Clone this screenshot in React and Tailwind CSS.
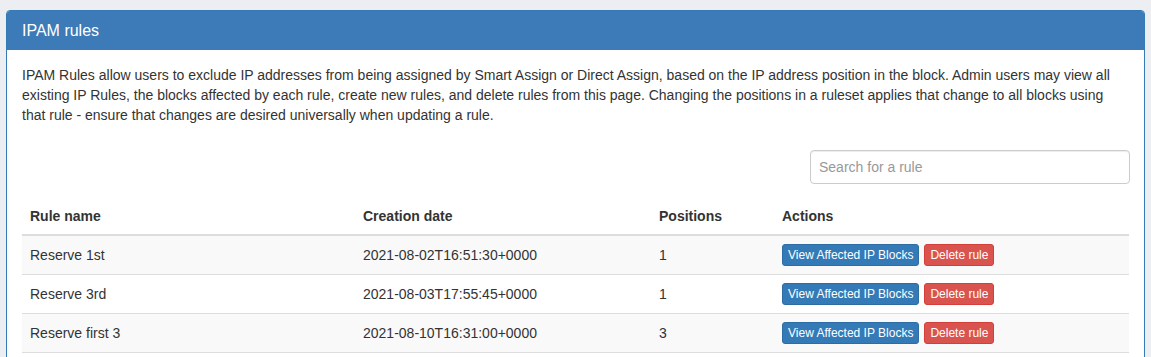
import React from 'react'

const rules = [
    { name: 'Reserve 1st', date: '2021-08-02T16:51:30+0000', positions: 1 },
    { name: 'Reserve 3rd', date: '2021-08-03T17:55:45+0000', positions: 1 },
    { name: 'Reserve first 3', date: '2021-08-10T16:31:00+0000', positions: 3 },
]

const App = () => {
    return (
        <main className="min-h-screen bg-[#eceef1] pt-[10px] pl-[6px] pr-[6px] text-[14px] leading-[20px] text-[#333]" style={{ fontFamily: '"Liberation Sans", Arial, sans-serif' }}>
            <div className="border border-[#337ab7] rounded-[4px] bg-white">
                {/* Heading */}
                <div className="bg-[#3d7ab8] text-white px-[15px] h-[39px] flex items-center text-[16px] rounded-t-[3px]">
                    IPAM rules
                </div>

                {/* Body */}
                <div className="px-[15px] pt-[15px] pb-[15px]">
                    <p className="mb-[25px]">
                        IPAM Rules allow users to exclude IP addresses from being assigned by Smart Assign or Direct Assign, based on the IP address position in the block. Admin users may view all existing IP Rules, the blocks affected by each rule, create new rules, and delete rules from this page. Changing the positions in a ruleset applies that change to all blocks using that rule - ensure that changes are desired universally when updating a rule.
                    </p>

                    <div className="flex justify-end">
                        <input
                            type="text"
                            placeholder="Search for a rule"
                            className="w-[320px] h-[34px] px-[8px] mr-[-1px] border border-[#ccc] rounded-[4px] text-[14px] placeholder-[#999] outline-none shadow-[inset_0_1px_1px_rgba(0,0,0,0.075)]"
                        />
                    </div>

                    <table className="w-full mt-[14px] border-collapse">
                        <thead>
                            <tr className="border-b-2 border-[#ddd] h-[37px]">
                                <th className="w-[333px] text-left font-bold px-[8px] py-[8px]">Rule name</th>
                                <th className="w-[296px] text-left font-bold px-[8px] py-[8px]">Creation date</th>
                                <th className="w-[123px] text-left font-bold px-[8px] py-[8px]">Positions</th>
                                <th className="text-left font-bold px-[8px] py-[8px]">Actions</th>
                            </tr>
                        </thead>
                        <tbody>
                            {rules.map((rule, i) => (
                                <tr key={rule.name} className={`h-[39px] border-b border-[#ddd] ${i % 2 === 0 ? 'bg-[#f9f9f9]' : 'bg-white'}`}>
                                    <td className="px-[8px] py-[8px] align-middle">{rule.name}</td>
                                    <td className="px-[8px] py-[8px] align-middle">{rule.date}</td>
                                    <td className="px-[8px] py-[8px] align-middle">{rule.positions}</td>
                                    <td className="px-[8px] py-[8px] align-middle">
                                        <div className="flex gap-[5px]">
                                            <button className="h-[22px] px-[5px] text-[12px] leading-[18px] text-white bg-[#337ab7] border border-[#2e6da4] rounded-[3px]">View Affected IP Blocks</button>
                                            <button className="h-[22px] px-[5px] text-[12px] leading-[18px] text-white bg-[#d9534f] border border-[#d43f3a] rounded-[3px]">Delete rule</button>
                                        </div>
                                    </td>
                                </tr>
                            ))}
                        </tbody>
                    </table>
                </div>
            </div>
        </main>
    )
}

export default App
